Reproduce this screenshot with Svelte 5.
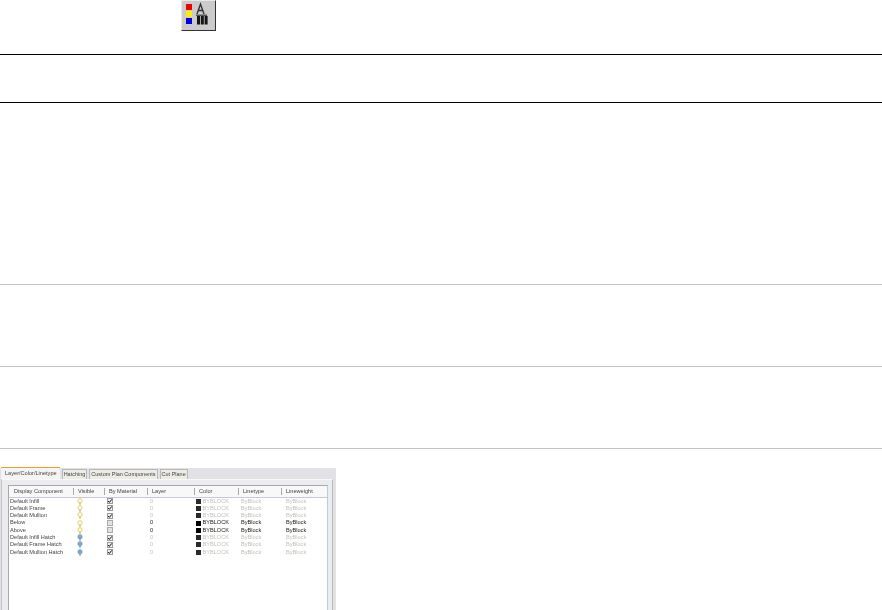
<script lang="ts">
  const columns = ['Display Component', 'Visible', 'By Material', 'Layer', 'Color', 'Linetype', 'Lineweight'];
  const tabs = ['Layer/Color/Linetype', 'Hatching', 'Custom Plan Components', 'Cut Plane'];

  const rows = [
    { name: 'Default Infill', bulb: 'on', checked: true },
    { name: 'Default Frame', bulb: 'on', checked: true },
    { name: 'Default Mullion', bulb: 'on', checked: true },
    { name: 'Below', bulb: 'on', checked: false },
    { name: 'Above', bulb: 'on', checked: false },
    { name: 'Default Infill Hatch', bulb: 'off', checked: true },
    { name: 'Default Frame Hatch', bulb: 'off', checked: true },
    { name: 'Default Mullion Hatch', bulb: 'off', checked: true }
  ];
</script>

<div class="page">
  <div class="icon-row">
    <div class="tool-button">
      <svg viewBox="0 0 33 29" width="33" height="29" aria-hidden="true">
        <rect x="4" y="3" width="6" height="6" fill="#f00000" />
        <rect x="4" y="10" width="6" height="6" fill="#f8f000" />
        <rect x="4" y="17" width="6" height="6" fill="#0000e8" />
        <path d="M15 13 L18.5 3 L22 13 M16 9.5 H21" fill="none" stroke="#333" stroke-width="1.4" />
        <path d="M14 13.5 H25 V15 H14 Z" fill="#555" />
        <rect x="15" y="15" width="3" height="8.5" fill="#151515" />
        <rect x="18.8" y="15" width="3" height="8.5" fill="#151515" />
        <rect x="22.6" y="15" width="3" height="8.5" fill="#151515" />
      </svg>
    </div>
  </div>

  <div class="band black tall"></div>
  <div class="band black mid"></div>
  <div class="band grey long"></div>
  <div class="band grey"></div>
  <div class="band grey"></div>

  <section class="dialog">
    <div class="tabs">
      {#each tabs as tab, i}
        <span class="tab" class:active={i === 0}>{tab}</span>
      {/each}
    </div>
    <div class="panel">
      <div class="list">
        <div class="head">
          {#each columns as col}
            <span class="head-cell">{col}</span>
          {/each}
        </div>
        {#each rows as row}
          <div class="row" class:muted={row.checked}>
            <span class="name">{row.name}</span>
            <span class="cell-bulb">
              <svg viewBox="0 0 6 7" width="6" height="7" aria-hidden="true">
                {#if row.bulb === 'on'}
                  <circle cx="3" cy="2.7" r="2.1" fill="#fdfbe8" stroke="#e0cc58" stroke-width="0.9" />
                  <rect x="2.2" y="5.2" width="1.6" height="1.4" fill="#b0b098" />
                {:else}
                  <circle cx="3" cy="2.7" r="2.5" fill="#7ea6c8" />
                  <rect x="2.2" y="5.2" width="1.6" height="1.4" fill="#7f94a8" />
                {/if}
              </svg>
            </span>
            <span class="cell-check">
              <span class="box" class:ticked={row.checked}>
                {#if row.checked}
                  <svg viewBox="0 0 6 6" width="6" height="6" aria-hidden="true">
                    <path d="M1.2 3 L2.4 4.4 L4.8 1.4" fill="none" stroke="#111" stroke-width="1" />
                  </svg>
                {/if}
              </span>
            </span>
            <span class="value layer">0</span>
            <span class="value color"><i class="swatch"></i>BYBLOCK</span>
            <span class="value linetype">ByBlock</span>
            <span class="value lineweight">ByBlock</span>
          </div>
        {/each}
      </div>
    </div>
  </section>
</div>

<style>
  :global(body) {
    margin: 0;
    background: #fff;
  }

  .page {
    width: 882px;
    height: 610px;
    overflow: hidden;
    display: flex;
    flex-direction: column;
    font-family: 'Liberation Sans', Arial, sans-serif;
  }

  .icon-row {
    height: 31px;
    padding-left: 181px;
  }

  .tool-button {
    width: 35px;
    height: 31px;
    box-sizing: border-box;
    background: #cbcbcb;
    border-top: 1px solid #e8e8e8;
    border-left: 1px solid #e8e8e8;
    border-right: 1px solid #333;
    border-bottom: 1px solid #333;
    display: flex;
    align-items: center;
    justify-content: center;
  }

  .band {
    height: 82px;
    box-sizing: border-box;
    border-bottom: 1px solid #c4c4c4;
    flex-shrink: 0;
  }

  .band.black {
    border-bottom-color: #000;
  }

  .band.tall {
    height: 24px;
  }

  .band.mid {
    height: 48px;
  }

  .band.long {
    height: 182px;
  }

  .dialog {
    margin-top: 19px;
    width: 336px;
    flex: 1;
    min-height: 0;
    display: flex;
    flex-direction: column;
    background: #e2e2e6;
    font-size: 5.6px;
    color: #444;
    filter: blur(0.25px);
  }

  .tabs {
    display: flex;
    height: 11px;
    flex-shrink: 0;
    padding-left: 1px;
    gap: 2px;
    align-items: flex-end;
  }

  .tab {
    height: 9px;
    line-height: 9px;
    padding: 0 1px;
    border: 1px solid #b8b8bc;
    border-bottom: none;
    background: #ecebe4;
    white-space: nowrap;
    font-size: 5.5px;
  }

  .tab.active {
    height: 11px;
    line-height: 11px;
    padding: 0 3px 0 4px;
    border: none;
    border-top: 1px solid #f0a030;
    background: #f4f4f2;
    font-size: 5.6px;
  }

  .panel {
    flex: 1;
    min-height: 0;
    display: flex;
    margin: 0 3px 0 1px;
    padding: 5px 4px 0 6px;
    background: #ececf0;
    border-top: 1px solid #f8f8f8;
    border-left: 1px solid #c4c4c4;
    border-right: 1px solid #b8b8b8;
  }

  .list {
    flex: 1;
    background: #fff;
    border-top: 1px solid #a8a8a8;
    border-left: 1px solid #a8a8a8;
    border-right: 1px solid #b4d0e8;
  }

  .head,
  .row {
    display: grid;
    grid-template-columns: 64px 31px 43px 47px 44px 43px 1fr;
    align-items: center;
  }

  .head {
    height: 11.5px;
    box-sizing: border-box;
    background: #f8f8f8;
    border-bottom: 1px solid #c8c8d8;
  }

  .head-cell {
    padding-left: 4px;
    border-left: 1px solid #aaa;
    line-height: 7px;
  }

  .head-cell:first-child {
    border-left: none;
    padding-left: 5px;
  }

  .row {
    height: 7.3px;
    line-height: 7.3px;
    color: #222;
  }

  .name {
    padding-left: 1px;
    color: #444;
  }

  .cell-bulb {
    display: flex;
    padding-left: 4px;
    height: 7.3px;
    align-items: center;
  }

  .cell-check {
    display: flex;
    padding-left: 3px;
    height: 7.3px;
    align-items: center;
  }

  .box {
    width: 6px;
    height: 6px;
    box-sizing: border-box;
    border: 1px solid #aaa;
    background: #e2e2e2;
    display: flex;
    align-items: center;
    justify-content: center;
  }

  .box.ticked {
    background: #eee;
    border-color: #999;
  }

  .box svg {
    flex-shrink: 0;
  }

  .value.layer {
    padding-left: 3px;
  }

  .value.color {
    display: flex;
    align-items: center;
    gap: 1.5px;
    padding-left: 2px;
  }

  .value.linetype {
    padding-left: 3px;
  }

  .value.lineweight {
    padding-left: 5px;
  }

  .swatch {
    width: 5px;
    height: 5px;
    background: #000;
    flex-shrink: 0;
  }

  .row.muted .value {
    color: #c2c2ba;
  }

  .row.muted .swatch {
    background: #2a2a2a;
  }
</style>
